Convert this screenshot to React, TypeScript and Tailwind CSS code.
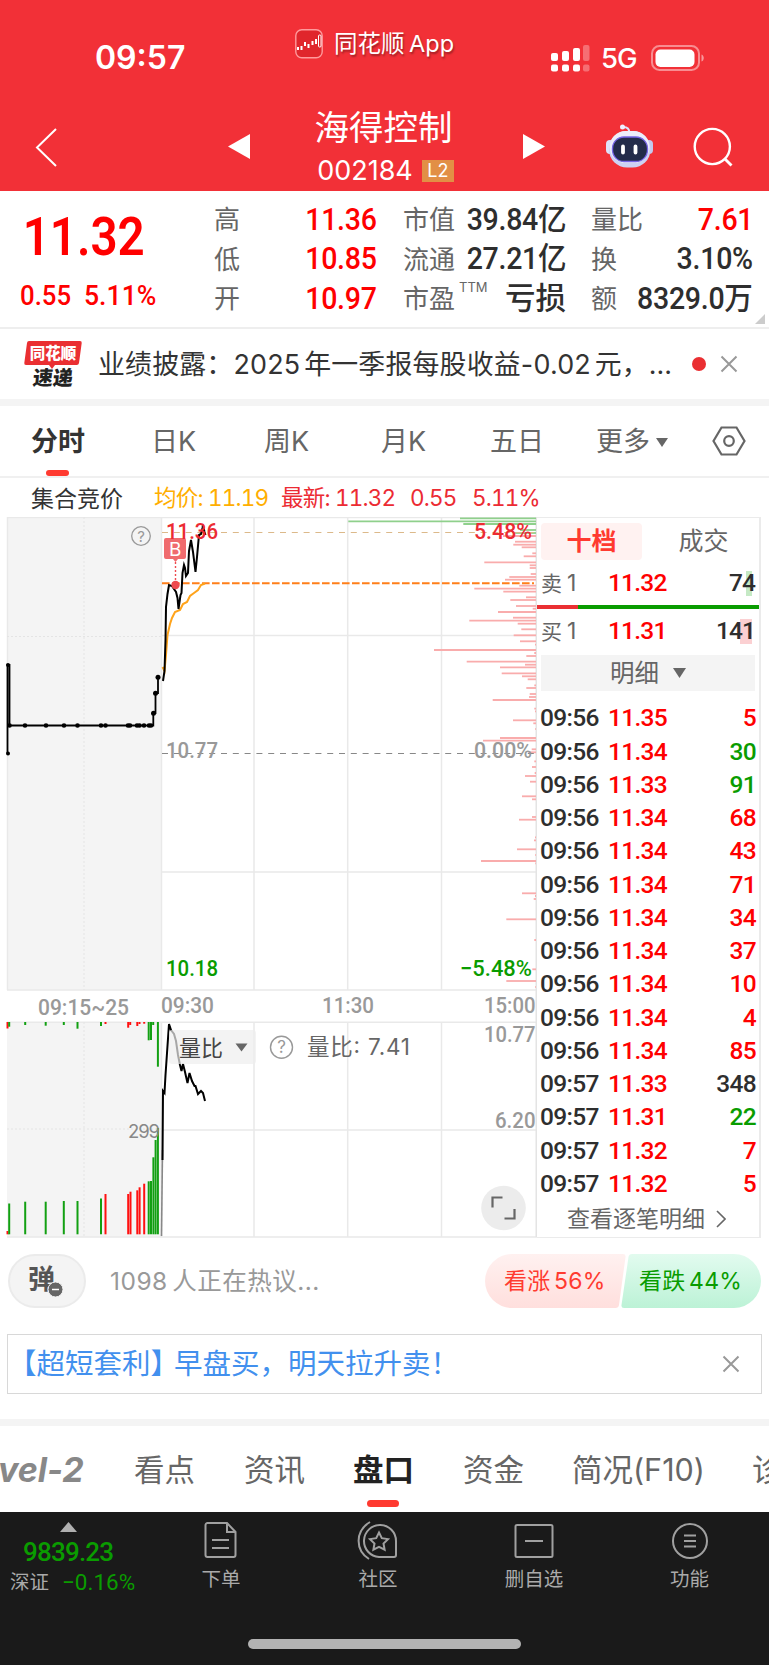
import clsx from 'clsx'
import React from 'react'

const NUM = "font-['Roboto','Noto_Sans_CJK_SC',sans-serif]"

// [start x, y] of the price distribution bars, all of them end at x=536
const GREEN_CHIPS = [[460, 518.3], [348.3, 521.3], [463.3, 524], [520, 530], [513, 533]]
const RED_CHIPS = [
  [503, 536], [515, 541.7], [513.3, 544.7], [521.7, 547.3], [532.3, 553.3], [523.7, 556.3], [484.3, 562.3],
  [529.7, 565.3], [529.7, 568], [530.7, 574], [509.3, 577], [505, 579.7], [519.3, 585.7], [474.3, 588.7],
  [503.3, 591.7], [526, 597.3], [510.3, 600], [516, 606], [532.7, 608.7], [498, 612], [513, 617.7],
  [469.3, 620.7], [517.7, 623.7], [521.3, 629.3], [513.7, 635.3], [520, 641.3], [535, 644.7], [434, 650],
  [534.3, 653], [526.3, 656], [466.7, 661.7], [525, 664.7], [500, 667.3], [501.7, 673.3], [522, 676.3],
  [527.7, 679.3], [534.3, 685.3], [526.3, 688], [529.7, 694], [529, 697], [492.7, 700], [534.3, 708.7],
  [535, 711.3], [513, 720.3], [533.3, 723.3], [535.3, 729], [500, 738], [483, 740.7], [531.7, 749.3],
  [528.3, 752.3], [534.3, 761.3], [532, 767], [534.7, 773], [525, 776], [530, 781.7], [522, 796.3],
  [532, 799.3], [532, 817], [519, 819.7], [535, 837.3], [534, 840.3], [517, 849.3], [535.3, 855],
  [481, 861], [535.3, 863.3], [522, 893.3], [535, 896], [533.7, 899], [506.3, 919.3], [534.3, 940],
  [532.3, 969.3], [506.3, 981], [535.3, 987],
]

const AUCTION_DOTS = [9.5, 25, 46, 64, 77.5, 101, 105.5, 128, 130, 137, 139.5, 144, 149, 151]

// [x, top of the bar, red?]
const VOLUME: [number, number, boolean][] = [
  [7.5, 1231, true], [9.2, 1203.5, false], [25.2, 1201.7, false], [45.7, 1201.7, false], [63.8, 1201, false],
  [77.5, 1201, false], [101, 1198.5, false], [105.5, 1194, true], [128.2, 1194, true], [130.5, 1191.7, true],
  [137.3, 1190.3, true], [139.6, 1187.3, true], [144.2, 1183.7, true], [148.7, 1181.3, false],
  [151, 1181, false], [153.4, 1157.3, false], [155.6, 1140, false], [157.9, 1128, false],
]
// [x, bottom of the bar, red?]
const UNMATCHED: [number, number, boolean][] = [
  [7.5, 1028.5, true], [9.2, 1026.7, false], [25.2, 1025, false], [45.7, 1025.7, false], [63.8, 1025, false],
  [77.5, 1028.7, false], [101, 1026, false], [105.5, 1024, true], [128.2, 1027.7, true], [130.2, 1025, true],
  [137.3, 1026, true], [139.5, 1024, true], [144.2, 1023.7, true], [148.7, 1040.3, false],
  [151, 1040, false], [153.2, 1025, false], [157.9, 1066.7, false],
]

const TICKS: [string, string, string, string][] = [
  ['09:56', '11.35', '5', 'r'], ['09:56', '11.34', '30', 'g'], ['09:56', '11.33', '91', 'g'],
  ['09:56', '11.34', '68', 'r'], ['09:56', '11.34', '43', 'r'], ['09:56', '11.34', '71', 'r'],
  ['09:56', '11.34', '34', 'r'], ['09:56', '11.34', '37', 'r'], ['09:56', '11.34', '10', 'r'],
  ['09:56', '11.34', '4', 'r'], ['09:56', '11.34', '85', 'r'], ['09:57', '11.33', '348', 'k'],
  ['09:57', '11.31', '22', 'g'], ['09:57', '11.32', '7', 'r'], ['09:57', '11.32', '5', 'r'],
]

function StatusBar() {
  return (
    <div className="flex h-[92px] items-start text-white">
      <div className="w-[295px] pt-[38px] pl-[95px] text-[32px] leading-10 font-semibold">09:57</div>
      <div className="flex w-[256px] items-center gap-[11px] pt-[29px]">
        <svg width="28" height="30" viewBox="0 0 28 30" fill="none">
          <rect x="0.8" y="0.8" width="26.4" height="28" rx="6" fill="#e0262c" stroke="#ff9a9c" strokeWidth="1.4" />
          <path d="M3 18v3M6.5 17v4M10 13v4M13.5 15v4M17.5 12v4M21 10v5" stroke="#fff" strokeWidth="2" />
          <rect x="23.5" y="6" width="2.5" height="12" rx="1" stroke="#fff" />
        </svg>
        <div className="text-[23.5px] leading-[30px] [word-spacing:-2px] whitespace-nowrap [text-shadow:1px_2px_2px_rgba(0,0,0,.35)]">
          同花顺 App
        </div>
      </div>
      <div className="flex items-center pt-[42px]">
        <svg width="39" height="30" viewBox="551 42 39 30" fill="#fff">
          <rect x="551" y="52" width="7" height="8" rx="2" />
          <rect x="562" y="50" width="7" height="10" rx="2" />
          <rect x="573" y="47" width="7" height="13" rx="2" />
          <rect x="583" y="44" width="6.5" height="16" rx="2" opacity=".3" />
          <rect x="551" y="63.5" width="7" height="7" rx="2" />
          <rect x="562" y="63.5" width="7" height="7" rx="2" />
          <rect x="573" y="63.5" width="7" height="7" rx="2" />
          <rect x="583" y="63.5" width="6.5" height="7" rx="2" opacity=".3" />
        </svg>
        <div className="w-[61px] pl-[11px] text-[27.5px] leading-8 font-medium tracking-[-1px]">5G</div>
        <svg width="54" height="28" viewBox="0 0 54 28" fill="none">
          <rect x="1" y="2" width="47" height="24" rx="7.5" stroke="#fff" strokeOpacity=".45" strokeWidth="2" />
          <rect x="4.5" y="5.5" width="39" height="17.5" rx="5" fill="#fff" />
          <path d="M50.5 10.5c3 1 3 6 0 7z" fill="#fff" fillOpacity=".5" />
        </svg>
      </div>
    </div>
  )
}

function Robot() {
  return (
    <svg width="50" height="46" viewBox="604 123 50 46">
      <path d="M623 127C628 127 629 129 629.5 133" fill="none" stroke="#dfe3fb" strokeWidth="2" />
      <circle cx="622.5" cy="127" r="2.5" fill="#eef0ff" />
      <rect x="606" y="140" width="8" height="14" rx="4" fill="#dfe1f8" />
      <rect x="645" y="140" width="8" height="14" rx="4" fill="#c3c8ee" />
      <rect x="609" y="131" width="41.5" height="36.5" rx="18" fill="#cdd2f3" />
      <rect x="609.5" y="131" width="40" height="32" rx="16" fill="#eceefb" />
      <rect x="612.5" y="137" width="35" height="24.5" rx="11.5" fill="#232c4a" stroke="#7565e6" strokeWidth="1.3" />
      <path d="M623 146.5V152.5M635.5 146.5V152.5" stroke="#fff" strokeWidth="3.8" strokeLinecap="round" />
    </svg>
  )
}

function TitleBar() {
  return (
    <div className="flex h-[99px] items-start text-white">
      <svg className="mt-[35px] ml-[34px]" width="26" height="42" viewBox="0 0 26 42" fill="none">
        <path d="M22 2L3 20.5L22 39" stroke="#fff" strokeWidth="2" />
      </svg>
      <svg className="mt-[42px] ml-[168px]" width="23" height="26" viewBox="0 0 23 26">
        <path d="M22 0v25L0 12.5z" fill="#fff" />
      </svg>
      <div className="ml-[50px] flex w-[165px] flex-col items-center">
        <div className="mt-[15px] text-[34.5px] leading-[42px]">海得控制</div>
        <div className="flex items-center gap-[9px] pl-[4px]">
          <span className="text-[27px] leading-[44px]">002184</span>
          <span className="h-[22px] w-8 bg-[#e28f45] text-center text-[18px] leading-[22px]">L2</span>
        </div>
      </div>
      <svg className="mt-[42px] ml-[57px]" width="23" height="26" viewBox="0 0 23 26">
        <path d="M0 0v25l22-12.5z" fill="#fff" />
      </svg>
      <div className="mt-[31px] ml-[58px]"><Robot /></div>
      <svg className="mt-[34px] ml-[38px]" width="42" height="42" viewBox="692 126 42 42" fill="none">
        <circle cx="712.3" cy="146.5" r="17.6" stroke="#fff" strokeWidth="2.4" />
        <path d="M724.5 158.5L731.5 165.5" stroke="#fff" strokeWidth="2.8" />
      </svg>
    </div>
  )
}

function Stat({ label, sup, value, red }: { label: string; sup?: string; value: string; red?: boolean }) {
  return (
    <div className="flex h-[39.5px] items-center justify-between whitespace-nowrap">
      <span className="flex text-[26px] text-[#666]">
        {label}
        {sup && <sup className="top-0 -mt-1 ml-1 text-[13px] leading-6">{sup}</sup>}
      </span>
      <span
        className={clsx(
          NUM,
          'origin-right font-medium',
          sup ? 'text-[30.5px]' : 'scale-x-[.92] text-[31px] tracking-[-0.3px]',
          red ? 'text-[#ff0000]' : 'text-[#2e2e2e]',
        )}
      >
        {value}
      </span>
    </div>
  )
}

function Quote() {
  return (
    <div className="relative flex h-[138px] border-b-2 border-[#eee]">
      <div className={clsx(NUM, 'w-[214px] pl-[20px] text-[#ff0000]')}>
        <div className="origin-left scale-x-[.88] pt-[15px] pl-[3px] text-[54px] leading-[62px] font-semibold">11.32</div>
        <div className="flex gap-[14px] pt-[12px] text-[28px] leading-8 font-medium">
          <span className="w-[50px] origin-left scale-x-[.92]">0.55</span>
          <span className="origin-left scale-x-[.95]">5.11%</span>
        </div>
      </div>
      <div className="w-[163px] pt-[9px]">
        <Stat label="高" value="11.36" red />
        <Stat label="低" value="10.85" red />
        <Stat label="开" value="10.97" red />
      </div>
      <div className="ml-[26px] w-[163px] pt-[9px]">
        <Stat label="市值" value="39.84亿" />
        <Stat label="流通" value="27.21亿" />
        <Stat label="市盈" sup="TTM" value="亏损" />
      </div>
      <div className="ml-[25px] w-[162px] pt-[9px]">
        <Stat label="量比" value="7.61" red />
        <Stat label="换" value="3.10%" />
        <Stat label="额" value="8329.0万" />
      </div>
      <svg className="absolute right-[4px] bottom-[3px]" width="10" height="10">
        <path d="M10 0v10H0z" fill="#ccc" />
      </svg>
    </div>
  )
}

function Cross() {
  return (
    <svg width="18" height="18" viewBox="0 0 18 18">
      <path d="M1.5 1.5l15 15M16.5 1.5l-15 15" stroke="#999" strokeWidth="2" />
    </svg>
  )
}

function News() {
  return (
    <div className="flex h-[70px] items-center pl-[24px]">
      <div className="flex w-[58px] flex-col items-center font-black">
        <svg width="58" height="28" viewBox="0 0 58 28">
          <path d="M5 0H56q2 0 1.7 2L55 22q-.3 2-2.3 2H31l-3 4l-3-4H2q-2 0-1.7-2L3 2q.2-2 2-2z" fill="#ea2f32" />
          <text x="29" y="18" textAnchor="middle" fill="#fff" className="text-[15.5px]">同花顺</text>
        </svg>
        <div className="-mt-px -skew-x-6 text-[20px] leading-[20px] text-[#222]">速递</div>
      </div>
      <div className="ml-[16px] w-[592px] text-[26.9px] tracking-[0.2px] [word-spacing:-4px] whitespace-nowrap text-[#333]">
        业绩披露：2025 年一季报每股收益-0.02 元，…
      </div>
      <div className="ml-[2px] size-[14px] rounded-full bg-[#ea2f32]" />
      <div className="ml-[14px]"><Cross /></div>
    </div>
  )
}

function PeriodTabs() {
  return (
    <div className="flex h-[72px] items-center border-b-2 border-[#f0f0f0] pt-[2px] text-[27px] whitespace-nowrap text-[#666]">
      <div className="relative ml-[31px] w-[120px] font-bold text-[#333]">
        分时
        <span className="absolute -bottom-[14px] left-[15px] h-[6px] w-[23px] rounded-full bg-[#ff3a30]" />
      </div>
      <div className="w-[113px]">日K</div>
      <div className="w-[117px]">周K</div>
      <div className="w-[109px]">月K</div>
      <div className="w-[106px]">五日</div>
      <div className="flex w-[116px] items-center gap-[6px]">
        更多
        <svg width="12" height="9"><path d="M0 0h12L6 9z" fill="#666" /></svg>
      </div>
      <svg className="-mt-[2px]" width="34" height="30" viewBox="0 0 34 30" fill="none" stroke="#666" strokeWidth="2.2">
        <path d="M9.5 1.5h15L32.5 15l-8 13.5h-15L1.5 15z" />
        <circle cx="17" cy="15" r="4.8" />
      </svg>
    </div>
  )
}

function AverageLine() {
  return (
    <div className="flex h-[39px] items-center pt-px text-[22.5px] tracking-[-0.8px] whitespace-nowrap text-[#ec2b33] tabular-nums">
      <div className="ml-[31px] w-[123px] pt-[2px] text-[23px] tracking-normal text-[#333]">集合竞价</div>
      <div className="w-[127px] text-[#ffae00]">均价: 11.19</div>
      <div className="w-[129px]">最新: 11.32</div>
      <div className="w-[62px]">0.55</div>
      <div>5.11%</div>
    </div>
  )
}

function AxisText({ x, y, w, fill = '#999', children }: { x: number; y: number; w: number; fill?: string; children: string }) {
  return (
    <text x={x} y={y} textLength={w} lengthAdjust="spacingAndGlyphs" fill={fill} className={clsx(NUM, 'text-[22.5px] font-medium')}>
      {children}
    </text>
  )
}

function Chart() {
  return (
    <svg className="shrink-0" width="537" height="723" viewBox="0 517 537 723" fill="none">
      <path d="M7 517H161V990H7zM7 1022H161V1237H7z" fill="#f4f4f4" />
      <path
        d="M7 517.5H537M7 990H537M7 1022.3H537M7 1237H537M162 635.5H537M162 872H537M162 1130H537M254 517V990M347.7 517V990M441.5 517V990M254 1022V1237M347.7 1022V1237M441.5 1022V1237M161.5 517V990M161.5 1022V1237M7.5 517V990"
        stroke="#e9e9e9"
        strokeWidth="1.5"
      />
      <path d="M84 517V990M84 1022V1237M7 636.5H161M7 1129H161" stroke="#e4e4e4" strokeDasharray="2 2" />
      <path d="M536.5 517V1237" stroke="#e4e4e4" strokeWidth="2" />

      {GREEN_CHIPS.map(([x, y]) => <path key={y} d={`M${x} ${y}H536`} stroke="#8fd08c" strokeWidth="1.8" />)}
      {RED_CHIPS.map(([x, y]) => <path key={y} d={`M${x} ${y}H536`} stroke="#f9acac" strokeWidth="1.8" />)}

      <path d="M162 532.5H536" stroke="#dcb98a" strokeWidth="1.2" strokeDasharray="6 5.8" />
      <path d="M162 753.5H536" stroke="#888" strokeWidth="1.1" strokeDasharray="6 5.8" />
      <path d="M162 583.2H534" stroke="#ff7f1a" strokeWidth="2" strokeDasharray="7.6 2.4" />

      {/* call auction */}
      <path d="M7.5 664V753M7.5 665H9.5V725.5H153.3V713H155.5V693H158V677" stroke="#000" strokeWidth="1.8" />
      {AUCTION_DOTS.map((x) => <circle key={x} cx={x} cy="725.5" r="2.3" fill="#000" />)}
      <circle cx="8" cy="665" r="2" fill="#000" />
      <circle cx="8" cy="753.5" r="2" fill="#000" />
      <circle cx="153.5" cy="713.3" r="2.5" fill="#000" />
      <circle cx="155.5" cy="693.3" r="2.5" fill="#000" />
      <circle cx="158" cy="677.3" r="2.5" fill="#000" />

      <path
        d="M162.5 667L164.5 671L166 655L167.5 635L170 624L172 618L175 612L180 610L183 604L187 602L190 596L194 593L198 590L201 585L205 583.5"
        stroke="#ffa31a"
        strokeWidth="2"
      />
      <path
        d="M163 681L164.5 671L165.5 640L166 607L167.5 594L169 585L172 586L176 592L177.5 598L178.5 609L180.5 595L181.5 593L182.5 573L184 565L185 568L186 576L188 573L189 551L191 540L193 552L195.5 572L197 557L199 535L201 534L202.5 528L203 525L204.5 532L205.5 535"
        stroke="#000"
        strokeWidth="2"
      />

      {/* buy marker */}
      <path d="M166 538h18a2 2 0 0 1 2 2v17a2 2 0 0 1-2 2h-6l-2.5 3l-2.5-3h-7a2 2 0 0 1-2-2v-17a2 2 0 0 1 2-2z" fill="#f06b6e" />
      <text x="175.2" y="556" textAnchor="middle" fill="#fff" className="text-[19px]">B</text>
      <path d="M175.5 562V580" stroke="#ee4a50" strokeWidth="1.4" strokeDasharray="2 2" />
      <circle cx="175.5" cy="585" r="4.2" fill="#ee4a50" />

      <circle cx="141" cy="536" r="9.3" stroke="#999" strokeWidth="1.3" />
      <text x="141" y="541.5" textAnchor="middle" fill="#999" className="text-[15px]">?</text>

      <AxisText x={166} y={539} w={52} fill="#ec2b33">11.36</AxisText>
      <AxisText x={474} y={539} w={58} fill="#ec2b33">5.48%</AxisText>
      <AxisText x={166} y={757.5} w={52}>10.77</AxisText>
      <AxisText x={474} y={757.5} w={58}>0.00%</AxisText>
      <AxisText x={166} y={976} w={52} fill="#099c00">10.18</AxisText>
      <AxisText x={460} y={976} w={72} fill="#099c00">−5.48%</AxisText>
      <AxisText x={38} y={1015} w={91}>09:15~25</AxisText>
      <AxisText x={161} y={1013} w={53}>09:30</AxisText>
      <AxisText x={322} y={1013} w={52}>11:30</AxisText>
      <AxisText x={484} y={1013} w={51.5}>15:00</AxisText>

      {UNMATCHED.map(([x, y, red]) => <path key={x} d={`M${x} 1022V${y}`} stroke={red ? '#ff1010' : '#12a012'} strokeWidth="2" />)}
      {VOLUME.map(([x, y, red]) => <path key={x} d={`M${x} ${y}V1234.3`} stroke={red ? '#ff1010' : '#12a012'} strokeWidth="2" />)}
      <text x="128" y="1138" textLength="32" fill="#888" className="text-[18.5px]">299</text>

      <path d="M161.5 1236L162.5 1150" stroke="#888" strokeWidth="1.6" />
      <path
        d="M162.5 1160L163 1091L164.5 1093L165.5 1075L169 1024L171 1030L174 1034L176 1041L178 1055L180 1065L181.5 1071L183 1064L185 1072L187.5 1083L189.5 1073L192 1081L194.5 1086H195.5L198 1094L201 1091L203 1093L205 1101"
        stroke="#000"
        strokeWidth="2"
      />
      <rect x="169" y="1030" width="87" height="34" rx="3" fill="#eee" fillOpacity=".7" />
      <text x="179" y="1055.5" fill="#444" className="text-[22px]">量比</text>
      <path d="M235.5 1043.5h12l-6 8z" fill="#666" />
      <circle cx="281.5" cy="1047.3" r="11" stroke="#999" strokeWidth="1.4" />
      <text x="281.5" y="1053.3" textAnchor="middle" fill="#999" className="text-[17px]">?</text>
      <text x="307" y="1055" textLength="103" fill="#666" className="text-[22.5px]">量比: 7.41</text>
      <AxisText x={484} y={1041.5} w={51.5}>10.77</AxisText>
      <AxisText x={495} y={1128} w={40.5}>6.20</AxisText>
      <circle cx="503.5" cy="1208" r="22.3" fill="#ececec" />
      <path d="M492.5 1207.5V1197.5H502.5M514.5 1209V1218.5H504.5" stroke="#666" strokeWidth="2.2" />
    </svg>
  )
}

function Level({ side, price, amount, tint }: { side: string; price: string; amount: string; tint: string }) {
  return (
    <div className="flex h-[45px] items-center px-[4px]">
      <span className="w-[67px] text-[21px] text-[#666]">{side}<span className="ml-[5px] text-[23px]">1</span></span>
      <span className={clsx(NUM, 'text-[24.5px] font-medium tracking-[-0.8px] text-[#ff0000]')}>{price}</span>
      <span className={clsx(NUM, 'relative ml-auto text-[24.5px] font-medium tracking-[-0.9px] text-[#2e2e2e]')}>
        <i className={clsx('absolute top-[6px] right-[3px] h-[25px]', tint)} />
        <span className="relative">{amount}</span>
      </span>
    </div>
  )
}

function OrderBook() {
  return (
    <div className="h-[721px] w-[224px] border-y-[1.5px] border-r-2 border-[#ebebeb]">
      <div className="flex h-[43px] items-center pt-[3px] pl-[4px] text-center text-[25px]">
        <div className="h-[37px] w-[103px] rounded-[4px] bg-[#fff2f1] leading-[36px] font-bold text-[#ff3a30]">十档</div>
        <div className="w-[119px] pl-[6px] leading-[36px] text-[#666]">成交</div>
      </div>
      <Level side="卖" price="11.32" amount="74" tint="w-[6px] bg-[#c5e9c5]" />
      <div className="-mt-px flex h-[4px]">
        <div className="w-[41px] bg-[#ea2f32]" />
        <div className="flex-1 bg-[#099c00]" />
      </div>
      <Level side="买" price="11.31" amount="141" tint="w-[12px] bg-[#fbd0d2]" />
      <div className="mx-[4px] mt-px flex h-[36px] items-center justify-center gap-[14px] bg-[#f4f4f4] text-[24.5px] text-[#666]">
        明细
        <svg width="13" height="10"><path d="M0 0h13L6.5 10z" fill="#666" /></svg>
      </div>
      <div className="mt-[11px]">
        {TICKS.map(([time, price, amount, tone], i) => (
          <div key={i} className={clsx(NUM, 'flex h-[33.25px] items-center px-[3px] text-[24.5px] font-medium tracking-[-0.7px]')}>
            <span className="w-[68px] text-[#2e2e2e]">{time}</span>
            <span className="text-[#ff0000]">{price}</span>
            <span
              className={clsx('ml-auto', {
                'text-[#ff0000]': tone === 'r',
                'text-[#099c00]': tone === 'g',
                'text-[#2e2e2e]': tone === 'k',
              })}
            >
              {amount}
            </span>
          </div>
        ))}
      </div>
      <div className="flex h-[37px] items-center gap-[11px] pl-[30px] text-[23px] whitespace-nowrap text-[#666]">
        查看逐笔明细
        <svg width="10" height="18" viewBox="0 0 10 18" fill="none"><path d="M1 1l8 8l-8 8" stroke="#666" strokeWidth="1.6" /></svg>
      </div>
    </div>
  )
}

function Discussion() {
  return (
    <div className="flex h-[68px] items-end pl-[8px]">
      <div className="relative h-[54px] w-[78px] rounded-full border-2 border-[#ebebeb] bg-[#f4f4f4] pl-[18px] text-[27px] leading-[48px] font-bold text-[#555]">
        弹
        <svg className="absolute top-[25px] left-[37px]" width="17" height="17">
          <circle cx="8.5" cy="8.5" r="7.5" fill="#666" stroke="#f4f4f4" />
          <path d="M5 8.5h7" stroke="#fff" strokeWidth="1.5" />
        </svg>
      </div>
      <div className="ml-[24px] w-[375px] text-[24.5px] leading-[53px] tracking-[0.5px] [word-spacing:-3px] text-[#999]">1098 人正在热议...</div>
      <div className="relative flex">
        <svg width="278" height="54" viewBox="0 0 278 54">
          <defs>
            <linearGradient id="up" x2="0" y2="1"><stop stopColor="#fff1f0" /><stop offset="1" stopColor="#ffdfdd" /></linearGradient>
            <linearGradient id="down" x2="0" y2="1"><stop stopColor="#e2fbef" /><stop offset="1" stopColor="#bcf2d6" /></linearGradient>
          </defs>
          <path d="M27 0H138q3 0 2.5 3L134 51q-.5 3-3.5 3H27a27 27 0 0 1 0-54z" fill="url(#up)" />
          <path d="M147 0H249a27 27 0 0 1 0 54H139q-3 0-2.5-3L143.5 3q.5-3 3.5-3z" fill="url(#down)" />
        </svg>
        <div className="absolute inset-0 flex text-[23px] leading-[55px] tracking-[0.2px] [word-spacing:-3px] whitespace-nowrap">
          <span className="w-[135px] pl-[19px] text-[#ff3b30]">看涨 56%</span>
          <span className="pl-[19px] text-[#099c00]">看跌 44%</span>
        </div>
      </div>
    </div>
  )
}

function BottomTabs() {
  return (
    <div className="flex h-[86px] items-center overflow-hidden pt-px text-[30.5px] whitespace-nowrap text-[#666] *:shrink-0">
      <div className="-ml-[2px] w-[136px] text-[34px] font-bold text-[#888] italic">vel-2</div>
      <div className="w-[110px]">看点</div>
      <div className="w-[109px]">资讯</div>
      <div className="relative w-[110px] font-bold text-[#222]">
        盘口
        <span className="absolute -bottom-[15px] left-[14px] h-[7px] w-[32px] rounded-full bg-[#ff3a30]" />
      </div>
      <div className="w-[109px]">资金</div>
      <div className="w-[180px]">简况(F10)</div>
      <div>诊</div>
    </div>
  )
}

function NavItem({ label, className, children }: { label: string; className: string; children: React.ReactNode }) {
  return (
    <div className={clsx('flex shrink-0 flex-col items-center pt-[8px] text-[19.5px] leading-[26px] text-[#aaa]', className)}>
      <svg width="42" height="40" viewBox="0 0 42 40" fill="none" stroke="#a0a0a0" strokeWidth="2">
        {children}
      </svg>
      <div className="mt-[6px]">{label}</div>
    </div>
  )
}

function NavBar() {
  return (
    <div className="h-[153px] bg-[#1a1a1a]">
      <div className="flex h-[127px]">
        <div className={clsx(NUM, 'w-[148px] shrink-0 text-[#0a9c00]')}>
          <svg className="mt-[10px] ml-[60px]" width="17" height="10"><path d="M0 10L8.5 0L17 10z" fill="#b0b0b0" /></svg>
          <div className="mt-[3px] pl-[23px] text-[26px] leading-[34px] font-medium tracking-[-0.8px]">9839.23</div>
          <div className="mt-px flex h-[26px] items-center pl-[10px] text-[22.5px]">
            <span className="w-[52px] text-[19.5px] text-[#aaa]">深证</span>
            −0.16%
          </div>
        </div>
        <NavItem label="下单" className="w-[146px]">
          <path d="M27 3H7.5a2 2 0 0 0-2 2V35a2 2 0 0 0 2 2H33.5a2 2 0 0 0 2-2V12zM27 3V12H35.5M12 20H29M12 28H29" />
        </NavItem>
        <NavItem label="社区" className="w-[168px]">
          <path d="M37 37H22A16 16 0 1 1 39 21V35a2 2 0 0 1-2 2zM13 2C-2 11-2 30 12 39" />
          <path d="M22 12.5l2.8 5.7l6.2.9l-4.5 4.4l1.1 6.2l-5.6-2.9l-5.6 2.9l1.1-6.2l-4.5-4.4l6.2-.9z" />
        </NavItem>
        <NavItem label="删自选" className="w-[144px]">
          <rect x="2.5" y="5" width="37" height="32" rx="1.5" />
          <path d="M12 21H30" />
        </NavItem>
        <NavItem label="功能" className="w-[167px]">
          <circle cx="21" cy="21" r="17" />
          <path d="M15 15.5H27M15 21H27M15 26.5H27" />
        </NavItem>
      </div>
      <div className="mx-auto h-[10px] w-[273px] rounded-full bg-[#b3b3b3]" />
    </div>
  )
}

export default function App() {
  return (
    <div className="h-[1665px] w-[769px] overflow-hidden bg-white font-['Inter','Noto_Sans_CJK_SC',sans-serif]">
      <div className="h-[191px] bg-[#f23037]">
        <StatusBar />
        <TitleBar />
      </div>
      <Quote />
      <News />
      <div className="h-[7px] bg-[#f4f4f4]" />
      <PeriodTabs />
      <AverageLine />
      <div className="flex h-[723px]">
        <Chart />
        <OrderBook />
      </div>
      <Discussion />
      <div className="mx-[7px] mt-[26px] flex h-[60px] items-center justify-between border-[1.5px] border-[#d8d8d8] pr-[21px] pl-[7px]">
        <div className="text-[28.5px] whitespace-nowrap text-[#4290ee]">
          <span className="-ml-[7px]">【超短套利】</span>
          <span className="-ml-[5px]">早盘买，明天拉升卖！</span>
        </div>
        <Cross />
      </div>
      <div className="mt-[25px] h-[7px] bg-[#f4f4f4]" />
      <BottomTabs />
      <NavBar />
    </div>
  )
}
